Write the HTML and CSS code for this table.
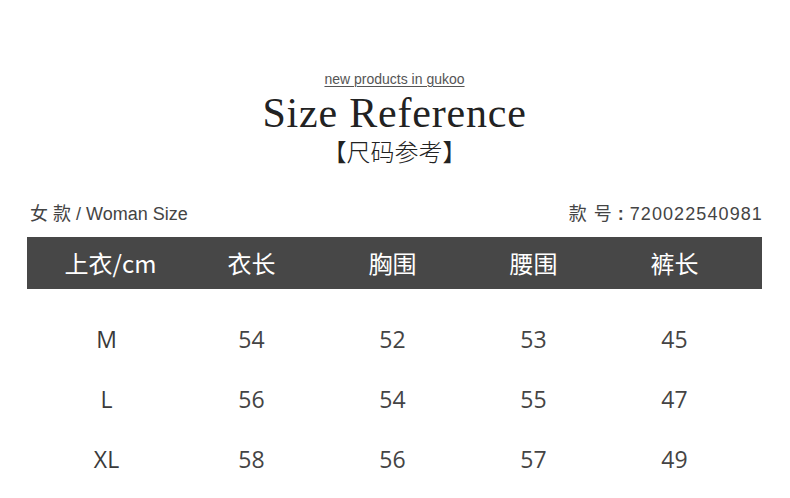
FILE: index.html
```html
<!DOCTYPE html>
<html>
<head>
<meta charset="utf-8">
<link rel="stylesheet" href="styles.css">
</head>
<body>
<div class="page">
  <div class="hero">
    <div class="tagline">new products in gukoo</div>
    <h1 class="title">Size Reference</h1>
    <div class="subtitle">【尺码参考】</div>
  </div>
  <div class="meta">
    <div class="meta-left">女 款 / Woman Size</div>
    <div class="meta-right"><span class="label">款 号</span><span class="colon">:</span><span class="num">720022540981</span></div>
  </div>
  <div class="table">
    <div class="row head">
      <div class="cell">上衣/cm</div>
      <div class="cell">衣长</div>
      <div class="cell">胸围</div>
      <div class="cell">腰围</div>
      <div class="cell">裤长</div>
    </div>
    <div class="body">
      <div class="row">
        <div class="cell size">M</div>
        <div class="cell">54</div>
        <div class="cell">52</div>
        <div class="cell">53</div>
        <div class="cell">45</div>
      </div>
      <div class="row">
        <div class="cell size">L</div>
        <div class="cell">56</div>
        <div class="cell">54</div>
        <div class="cell">55</div>
        <div class="cell">47</div>
      </div>
      <div class="row">
        <div class="cell size">XL</div>
        <div class="cell">58</div>
        <div class="cell">56</div>
        <div class="cell">57</div>
        <div class="cell">49</div>
      </div>
    </div>
  </div>
</div>
</body>
</html>
```
FILE: styles.css
```css
* { box-sizing: border-box; }
html, body { margin: 0; padding: 0; background: #fff; }
body { width: 790px; height: 498px; overflow: hidden; font-family: "Noto Sans", "Noto Sans CJK SC", sans-serif; color: #333; }
.page { padding: 0 28px 0 27px; }
.hero { display: flex; flex-direction: column; align-items: center; padding-top: 70px; }
.tagline { font-family: "Liberation Sans", "Noto Sans CJK SC", sans-serif; font-size: 14px; color: #555; text-decoration: underline; text-decoration-thickness: 1px; text-underline-offset: 2px; line-height: 18px; }
.title { margin: 2px 0 0; font-family: "Liberation Serif", serif; font-weight: normal; font-size: 42px; letter-spacing: 0.8px; line-height: 46px; color: #222; }
.subtitle { font-family: "Noto Sans CJK SC", sans-serif; font-weight: 300; font-size: 24px; line-height: 30px; color: #222; }
.meta { display: flex; justify-content: space-between; align-items: center; margin-top: 37px; padding: 0 0 0 3px; font-family: "Liberation Sans", "Noto Sans CJK SC", sans-serif; font-size: 18px; color: #444; line-height: 22px; }
.meta-right { display: flex; align-items: center; }
.meta-right .label { letter-spacing: 1px; }
.meta-right .colon { margin: 0 6px 0 5px; font-weight: bold; }
.meta-right .num { letter-spacing: 1.1px; margin-right: -1px; }
.table { margin-top: 12px; }
.row { display: grid; grid-template-columns: repeat(5, 141px); padding-left: 13px; }
.head { background: #474747; height: 52px; align-items: center; }
.head .cell { color: #fff; font-family: "Noto Sans CJK SC", sans-serif; font-weight: 400; font-size: 24px; text-align: center; line-height: 52px; }
.body { margin-top: 20px; }
.body .row { height: 60px; align-items: center; }
.body .cell { text-align: center; font-family: "Open Sans", "Noto Sans", sans-serif; font-weight: 400; font-size: 23px; color: #444; }
.body .cell.size { padding-right: 8px; color: #3a3a3a; }
```
